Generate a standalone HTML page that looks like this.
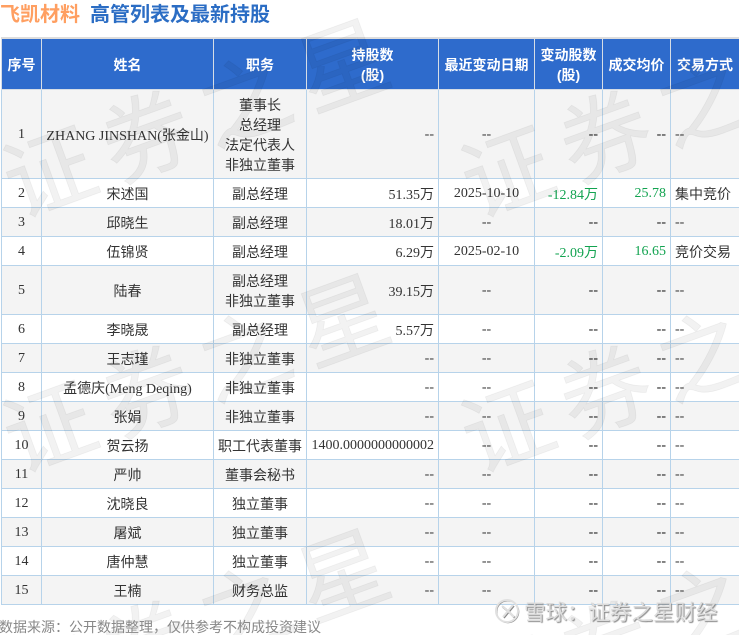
<!DOCTYPE html>
<html><head><meta charset="utf-8">
<style>
html,body{margin:0;padding:0;background:#fff;width:739px;height:635px;overflow:hidden;}
body{position:relative;font-family:"Liberation Serif","Noto Sans CJK SC",serif;color:#333;}
.t{position:absolute;top:1px;left:0;font:bold 20px/28px "Liberation Sans","Noto Sans CJK SC",sans-serif;white-space:nowrap;filter:blur(.3px);}
.o{color:#ff9f61;letter-spacing:0;}
.b{color:#2b6dc4;position:absolute;left:90px;top:0;}
table{position:absolute;left:1px;top:37px;border-collapse:collapse;table-layout:fixed;width:738px;font-size:14px;filter:blur(.3px);border-top:2px solid #ddd;}
th{background:#2e6bcc;color:#fff;border:1px solid #d6dde6;border-top:0;font:bold 14px "Liberation Sans","Noto Sans CJK SC",sans-serif;padding:2px 2px 0;height:48px;text-align:center;}
td{border:1px solid #b7d3ea;padding:5px 4px 3px;height:20px;text-align:center;white-space:nowrap;overflow:hidden;}
tr.g td{background:#f4f4f4;}
td.r{text-align:right;padding-right:4px;}
td.l{text-align:left;padding-left:4px;}
td:nth-child(6),td:nth-child(7){color:#111;}
td.gr{color:#12a350;}
.clip{position:absolute;left:0;top:0;width:739px;height:635px;overflow:hidden;pointer-events:none;}
.wm{position:absolute;font:90px/90px "Liberation Sans","Noto Sans CJK SC",sans-serif;color:rgba(0,0,0,.05);-webkit-text-stroke:.8px rgba(0,0,0,.05);letter-spacing:14px;white-space:nowrap;transform:rotate(-20deg);transform-origin:0 50%;}
.ft{position:absolute;left:-1px;top:619px;font:14px/16px "Liberation Sans","Noto Sans CJK SC",sans-serif;color:#888;white-space:nowrap;filter:blur(.3px);}
.xq{position:absolute;left:524px;top:598px;font:21.5px/31px "Liberation Sans","Noto Sans CJK SC",sans-serif;color:#dcdcdc;text-shadow:1px 1px 1px #888;white-space:nowrap;}
svg{position:absolute;left:494px;top:598px;}
</style></head><body>
<div class="t"><span class="o">飞凯材料</span><span class="b">高管列表及最新持股</span></div>
<table>
<colgroup><col style="width:40px"><col style="width:172px"><col style="width:93px"><col style="width:132px"><col style="width:96px"><col style="width:68px"><col style="width:68px"><col style="width:69px"></colgroup>
<tr><th>序号</th><th>姓名</th><th>职务</th><th>持股数<br>(股)</th><th>最近变动日期</th><th>变动股数<br>(股)</th><th>成交均价</th><th>交易方式</th></tr>
<tr class="g"><td>1</td><td>ZHANG JINSHAN(张金山)</td><td>董事长<br>总经理<br>法定代表人<br>非独立董事</td><td class="r">--</td><td>--</td><td class="r">--</td><td class="r">--</td><td class="l">--</td></tr>
<tr><td>2</td><td>宋述国</td><td>副总经理</td><td class="r">51.35万</td><td>2025-10-10</td><td class="r gr">-12.84万</td><td class="r gr">25.78</td><td class="l">集中竞价</td></tr>
<tr class="g"><td>3</td><td>邱晓生</td><td>副总经理</td><td class="r">18.01万</td><td>--</td><td class="r">--</td><td class="r">--</td><td class="l">--</td></tr>
<tr><td>4</td><td>伍锦贤</td><td>副总经理</td><td class="r">6.29万</td><td>2025-02-10</td><td class="r gr">-2.09万</td><td class="r gr">16.65</td><td class="l">竞价交易</td></tr>
<tr class="g"><td>5</td><td>陆春</td><td>副总经理<br>非独立董事</td><td class="r">39.15万</td><td>--</td><td class="r">--</td><td class="r">--</td><td class="l">--</td></tr>
<tr><td>6</td><td>李晓晟</td><td>副总经理</td><td class="r">5.57万</td><td>--</td><td class="r">--</td><td class="r">--</td><td class="l">--</td></tr>
<tr class="g"><td>7</td><td>王志瑾</td><td>非独立董事</td><td class="r">--</td><td>--</td><td class="r">--</td><td class="r">--</td><td class="l">--</td></tr>
<tr><td>8</td><td>孟德庆(Meng Deqing)</td><td>非独立董事</td><td class="r">--</td><td>--</td><td class="r">--</td><td class="r">--</td><td class="l">--</td></tr>
<tr class="g"><td>9</td><td>张娟</td><td>非独立董事</td><td class="r">--</td><td>--</td><td class="r">--</td><td class="r">--</td><td class="l">--</td></tr>
<tr><td>10</td><td>贺云扬</td><td>职工代表董事</td><td class="r">1400.0000000000002</td><td>--</td><td class="r">--</td><td class="r">--</td><td class="l">--</td></tr>
<tr class="g"><td>11</td><td>严帅</td><td>董事会秘书</td><td class="r">--</td><td>--</td><td class="r">--</td><td class="r">--</td><td class="l">--</td></tr>
<tr><td>12</td><td>沈晓良</td><td>独立董事</td><td class="r">--</td><td>--</td><td class="r">--</td><td class="r">--</td><td class="l">--</td></tr>
<tr class="g"><td>13</td><td>屠斌</td><td>独立董事</td><td class="r">--</td><td>--</td><td class="r">--</td><td class="r">--</td><td class="l">--</td></tr>
<tr><td>14</td><td>唐仲慧</td><td>独立董事</td><td class="r">--</td><td>--</td><td class="r">--</td><td class="r">--</td><td class="l">--</td></tr>
<tr class="g"><td>15</td><td>王楠</td><td>财务总监</td><td class="r">--</td><td>--</td><td class="r">--</td><td class="r">--</td><td class="l">--</td></tr>
</table>
<div class="clip">
<div class="wm" style="left:8px;top:145px">证券之星</div>
<div class="wm" style="left:466px;top:145px">证券之星</div>
<div class="wm" style="left:8px;top:400px">证券之星</div>
<div class="wm" style="left:466px;top:400px">证券之星</div>
<div class="wm" style="left:8px;top:655px">证券之星</div>
<div class="wm" style="left:466px;top:655px">证券之星</div>
</div>
<div class="ft">数据来源：公开数据整理，仅供参考不构成投资建议</div>
<svg width="28" height="28" viewBox="0 0 28 28" fill="none"><g stroke="#888" transform="translate(.8 .8)"><circle cx="13" cy="13" r="11"/><path d="M8 8l6 5-5 6M19 7l-5 6 6 6" stroke-width="2"/></g><g stroke="#e0e0e0"><circle cx="13" cy="13" r="11" stroke-width="2"/><path d="M8 8l6 5-5 6M19 7l-5 6 6 6" stroke-width="2"/></g></svg>
<div class="xq">雪球：证券之星财经</div>
</body></html>
